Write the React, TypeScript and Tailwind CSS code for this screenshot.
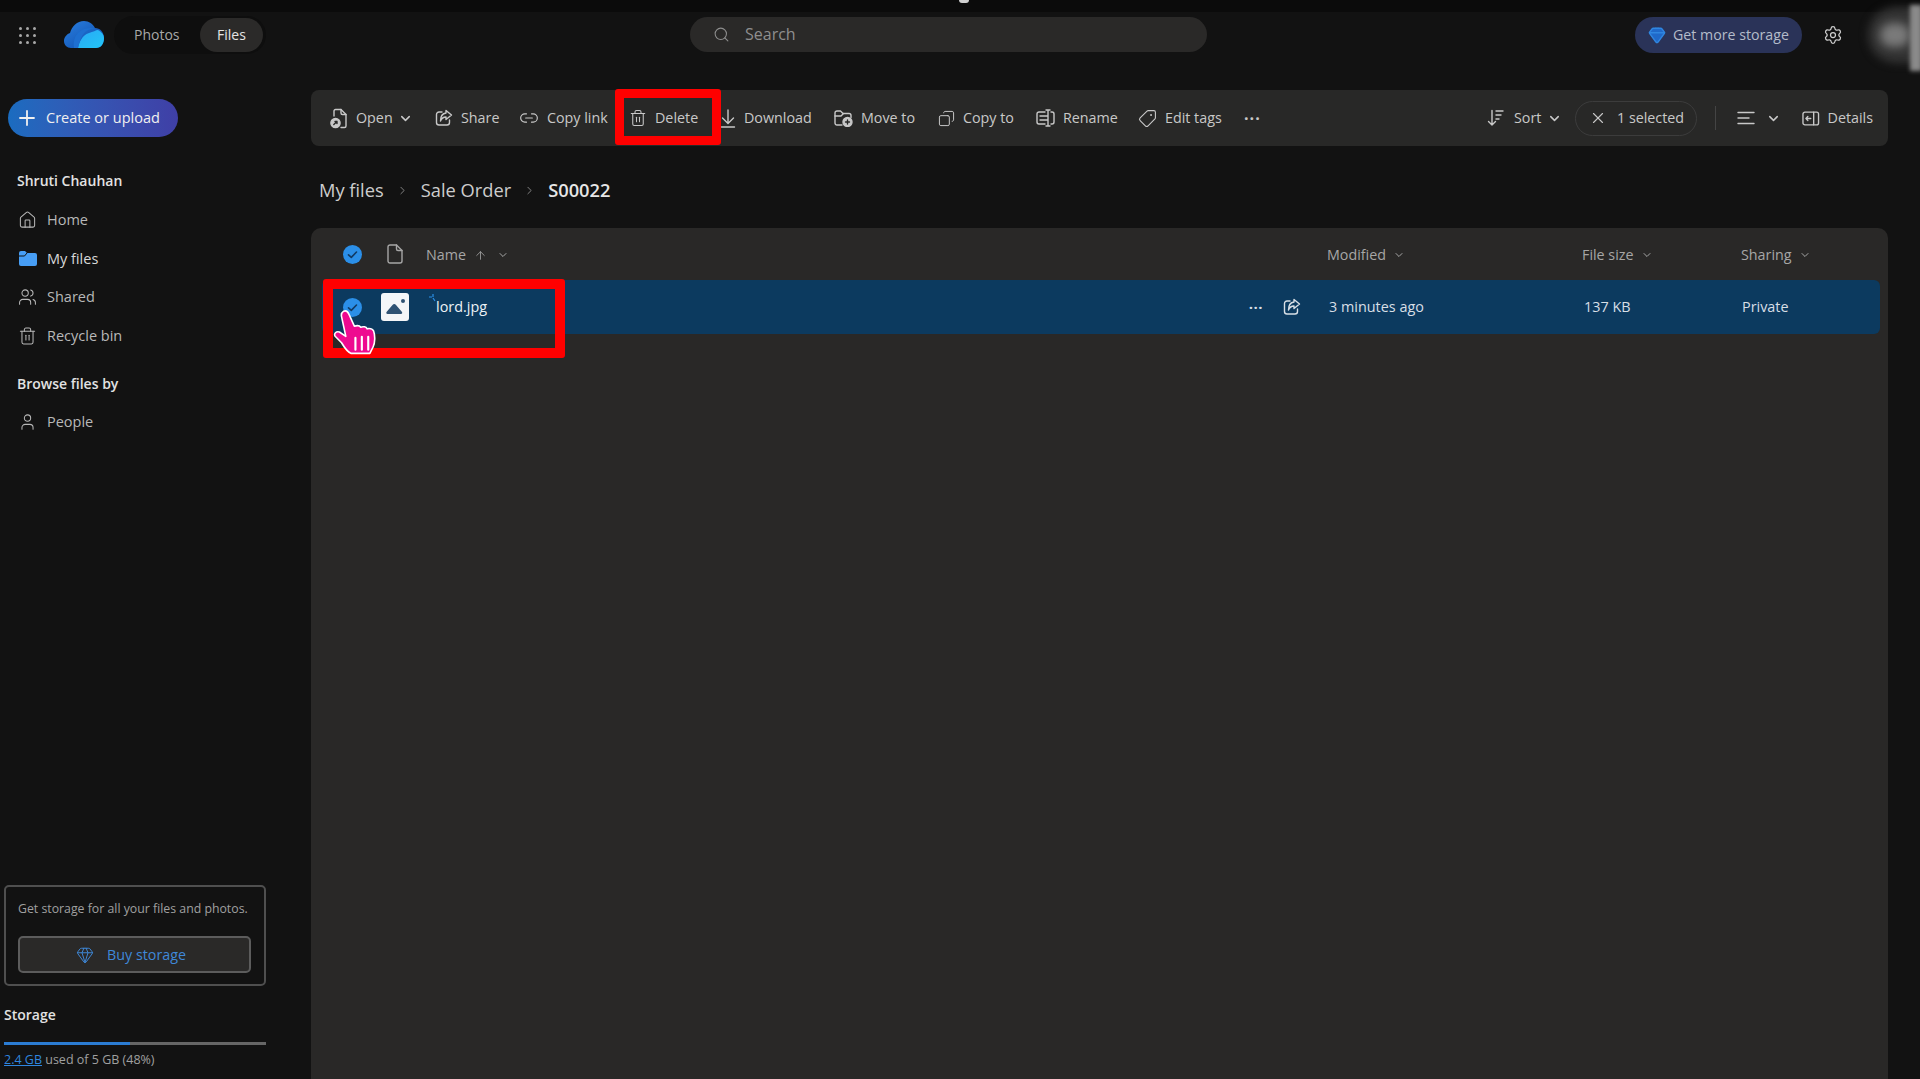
import { ArrowUp, ChevronDown, ChevronRight, Copy, Gem, House, Link2, Search, Settings, Tag, Trash2, User, Users, X } from 'lucide-react'
import type { ReactNode } from 'react'

function Cloud() {
  return (
    <svg width="40" height="28" viewBox="0 0 40 28">
      <defs>
        <linearGradient id="cloudA" x1="0" y1="0" x2="1" y2="1">
          <stop offset="0" stopColor="#2a7fe0" />
          <stop offset="1" stopColor="#0c4aa8" />
        </linearGradient>
        <linearGradient id="cloudB" x1="0" y1="0" x2="1" y2="1">
          <stop offset="0" stopColor="#2aa8f5" />
          <stop offset="1" stopColor="#22c6f7" />
        </linearGradient>
      </defs>
      <path d="M7 27C3 27 0 24 0 20c0-4 3-7 6-8C8 5 13 0 20 0c5 0 9 3 11 7 5 0 9 4 9 10 0 6-3 10-8 10Z" fill="url(#cloudA)" />
      <path d="M14 27c1-5 4-13 11-15 4-1 7-3 9-3 4 2 6 5 6 8 0 6-3 10-8 10Z" fill="url(#cloudB)" />
      <path d="M10 27c-1-8 1-15 10-19 3-1 7-1 11-1-6 1-10 3-13 8-2 4-3 8-4 12Z" fill="#1e6fd0" />
    </svg>
  )
}

function Grip() {
  return (
    <div className="grid w-[17px] grid-cols-3 gap-[4px]">
      {Array.from({ length: 9 }, (_, i) => (
        <span key={i} className="h-[3px] w-[3px] rounded-full bg-[#a8a8a8]" />
      ))}
    </div>
  )
}

const stroke = { fill: 'none', stroke: 'currentColor', strokeWidth: 1.4, strokeLinecap: 'round', strokeLinejoin: 'round' } as const

function FileOpenIcon() {
  return (
    <svg width="18" height="21" viewBox="0 0 18 21" {...stroke}>
      <path d="M4 8V3a1.5 1.5 0 0 1 1.5-1.5H11L16 6.5V18a1.5 1.5 0 0 1-1.5 1.5H11" />
      <path d="M11 1.5V5a1.5 1.5 0 0 0 1.5 1.5H16" />
      <circle cx="5.5" cy="15" r="4.6" fill="currentColor" />
      <path d="M3.8 16.5 7 13.5M5 13.5h2v2" stroke="#282827" />
    </svg>
  )
}

function ShareIcon() {
  return (
    <svg width="18" height="18" viewBox="0 0 18 18" {...stroke}>
      <path d="M7 3H4a2.5 2.5 0 0 0-2.5 2.5v8A2.5 2.5 0 0 0 4 16h8a2.5 2.5 0 0 0 2.5-2.5V11" />
      <path d="M11 1.5 16.5 6 11 10.5V8C8 8 6.5 9.5 5.5 12c0-4.5 2-7.5 5.5-8Z" />
    </svg>
  )
}

function DownloadIcon() {
  return (
    <svg width="16" height="19" viewBox="0 0 16 19" {...stroke}>
      <path d="M8 1v13M2.5 9 8 14.5 13.5 9M1.5 18h13" />
    </svg>
  )
}

function MoveIcon() {
  return (
    <svg width="19" height="17" viewBox="0 0 19 17" {...stroke}>
      <path d="M8 15H3a2 2 0 0 1-2-2V3a2 2 0 0 1 2-2h3.500l2.500 2.500h6a2 2 0 0 1 2 2v2" />
      <path d="M1 6h6l2.500-2.500" />
      <circle cx="13.500" cy="12" r="4.500" fill="currentColor" />
      <path d="M13.500 10v4M11.500 12h4" stroke="#282827" />
    </svg>
  )
}

function RenameIcon() {
  return (
    <svg width="19" height="18" viewBox="0 0 19 18" {...stroke}>
      <path d="M9 3H3a2 2 0 0 0-2 2v8a2 2 0 0 0 2 2h6M15 3h1a2 2 0 0 1 2 2v8a2 2 0 0 1-2 2h-1" />
      <path d="M12 1v16M10 1h4M10 17h4M4 7h8M4 11h8" />
    </svg>
  )
}

function SortIcon() {
  return (
    <svg width="17" height="18" viewBox="0 0 17 18" {...stroke}>
      <path d="M5 1.500v14.500M1.500 12.500 5 16l3.500-3.500M9 2h7M9 6h5M9 10h3" />
    </svg>
  )
}

function LinesIcon() {
  return (
    <svg width="18" height="14" viewBox="0 0 18 14" {...stroke}>
      <path d="M1 1.500h16M1 7h11M1 12.500h16" />
    </svg>
  )
}

function DetailsIcon() {
  return (
    <svg width="18" height="15" viewBox="0 0 18 15" {...stroke}>
      <rect x="1" y="1" width="16" height="13" rx="2" />
      <path d="M12 1v13M9 7.500H4M6 5.500l-2 2 2 2" />
    </svg>
  )
}

function FileIcon() {
  return (
    <svg width="16" height="20" viewBox="0 0 16 20" {...stroke}>
      <path d="M3 1h6.500L15 6.500V17a2 2 0 0 1-2 2H3a2 2 0 0 1-2-2V3a2 2 0 0 1 2-2Z" />
      <path d="M9.500 1v4a1.500 1.500 0 0 0 1.500 1.500h4" />
    </svg>
  )
}

function CheckDot() {
  return (
    <svg width="19" height="19" viewBox="0 0 19 19">
      <circle cx="9.500" cy="9.500" r="9.500" fill="#2b8fe8" />
      <path d="M5.500 9.800 8.300 12.400 13.500 7" fill="none" stroke="#123a63" strokeWidth="1.600" strokeLinecap="round" strokeLinejoin="round" />
    </svg>
  )
}

function ImageThumb() {
  return (
    <svg width="28" height="28" viewBox="0 0 28 28">
      <rect width="28" height="28" rx="3" fill="#f4f6f8" />
      <path d="M6.500 21c-1 0-1.500-1-1-2l6-7c1-1.200 2.500-1.200 3.500 0l6 7c.5 1 0 2-1 2Z" fill="#2f5273" />
      <circle cx="22" cy="8" r="2" fill="#2f5273" />
    </svg>
  )
}

function Folder() {
  return (
    <svg width="18" height="15" viewBox="0 0 18 15">
      <path d="M2 0h4l2 2h8a2 2 0 0 1 2 2v9a2 2 0 0 1-2 2H2a2 2 0 0 1-2-2V2a2 2 0 0 1 2-2Z" fill="#479ef5" />
      <path d="M0 5h5.500L8 2" fill="none" stroke="#121212" strokeWidth="1" />
    </svg>
  )
}

function Hand() {
  return (
    <svg width="47" height="47" viewBox="0 0 44 44">
      <path
        d="M10 3c2.500-1 4 .5 5 3l5 11c3-1 5-.5 6 1 2-1 5-.5 6 1.500 2-.5 5 0 6 2 1.500 4 1.500 11-.5 15-1 2-2 4-3 6H17c-3-1-6-5-9-10l-6-6c-1.500-2.500 1-5 4-4l6 4L8 8c-.5-2 .5-4 2-5Z"
        fill="#ee0a90"
        stroke="#ffffff"
        strokeWidth="1.500"
        strokeLinejoin="round"
      />
      <path d="M21 28v11M27 27v12M33 27v12" stroke="#ffffff" strokeWidth="2" strokeLinecap="round" />
    </svg>
  )
}

function ToolItem({ icon, label, width, chevron }: { icon: ReactNode; label: string; width: string; chevron?: boolean }) {
  return (
    <div className={`flex shrink-0 items-center gap-[8px] ${width}`}>
      {icon}
      <span className="whitespace-nowrap">{label}</span>
      {chevron && <ChevronDown size={15} strokeWidth={2.4} className="-ml-[3px]" />}
    </div>
  )
}

function NavItem({ icon, label, active }: { icon: ReactNode; label: string; active?: boolean }) {
  return (
    <div className={`flex h-[38.500px] items-center gap-[10px] pl-[18px] text-[14.500px] ${active ? 'font-medium text-[#d8d8d8]' : 'text-[#b8b8b8]'}`}>
      <span className="flex w-[19px] justify-center">{icon}</span>
      {label}
    </div>
  )
}

function ColHead({ label, width }: { label: string; width: string }) {
  return (
    <div className={`flex shrink-0 items-center gap-[7px] pt-[2px] text-[14.300px] font-medium text-[#a6a6a6] ${width}`}>
      {label}
      <ChevronDown size={12} strokeWidth={2} />
    </div>
  )
}

export default function App() {
  return (
    <div className="flex h-[1079px] w-[1920px] flex-col overflow-hidden bg-[#121212] font-['Open_Sans','Noto_Sans',sans-serif] text-[#cfcfcf]">
      <div className="flex h-[12px] shrink-0 justify-center bg-[#0b0b0b]">
        <span className="ml-[8px] h-[3px] w-[10px] rounded-b-full bg-[#d0d0d0]" />
      </div>

      <header className="flex h-[46px] shrink-0 items-center">
        <div className="flex w-[690px] shrink-0 items-center pl-[19px]">
          <Grip />
          <div className="ml-[28px] -mt-[1px]">
            <Cloud />
          </div>
          <div className="ml-[10px] -mt-[1px] flex h-[38px] w-[152px] items-center justify-between rounded-full bg-[#0e0e0e] pl-[20px] pr-[3px] text-[14px]">
            <span className="text-[#a8a8a8]">Photos</span>
            <span className="flex h-[34px] w-[63px] items-center justify-center rounded-full bg-[#2b2a29] font-medium text-[#e4e4e4]">Files</span>
          </div>
        </div>
        <div className="-mt-[1px] flex h-[35px] w-[517px] shrink-0 items-center gap-[15px] rounded-full bg-[#2a2928] pl-[23px] text-[16px] text-[#8e8e8e]">
          <Search size={17} strokeWidth={1.500} />
          <span className="-mt-[2px]">Search</span>
        </div>
        <div className="ml-[428px] flex h-[36px] w-[167px] shrink-0 items-center gap-[7px] rounded-full bg-[#2a3358] pl-[13px] text-[14.200px] text-[#b4bcca]">
          <Gem size={18} className="fill-[#2069c9] text-[#2f86e0]" />
          Get more storage
        </div>
        <Settings size={20} strokeWidth={1.500} className="ml-[21px] shrink-0 text-[#d0d0d0]" />
        <div className="relative ml-[25px] h-[56px] w-[54px] shrink-0 overflow-visible">
          <div className="absolute inset-0 rounded-l-full bg-[#333333] blur-[4px]" />
          <div className="absolute left-[12px] top-[16px] h-[24px] w-[30px] rounded-full bg-[#7a7a7a] blur-[5px]" />
          <div className="absolute right-0 top-[-2px] h-[66px] w-[12px] bg-[#8a8a8a] blur-[2px]" />
        </div>
      </header>

      <div className="flex min-h-0 flex-1">
        <aside className="flex w-[311px] shrink-0 flex-col pb-[9px]">
          <div className="ml-[8px] mt-[41px] flex h-[38px] w-[170px] items-center gap-[11px] rounded-full bg-gradient-to-r from-[#1a6cc0] to-[#3f3fa6] pl-[11px] text-[14.500px] font-medium text-[#f0f0f0]">
            <svg width="16" height="16" viewBox="0 0 16 16" fill="none" stroke="currentColor" strokeWidth="1.800" strokeLinecap="round">
              <path d="M8 1v14M1 8h14" />
            </svg>
            Create or upload
          </div>
          <div className="mt-[33px] pl-[17px] text-[14px] font-semibold text-[#e2e2e2]">Shruti Chauhan</div>
          <div className="mt-[10px]">
            <NavItem icon={<House size={20} strokeWidth={1.300} />} label="Home" />
            <NavItem icon={<Folder />} label="My files" active />
            <NavItem icon={<Users size={20} strokeWidth={1.300} />} label="Shared" />
            <NavItem icon={<Trash2 size={20} strokeWidth={1.300} />} label="Recycle bin" />
          </div>
          <div className="mt-[18px] pl-[17px] text-[14px] font-semibold text-[#e2e2e2]">Browse files by</div>
          <div className="mt-[9px]">
            <NavItem icon={<User size={20} strokeWidth={1.300} />} label="People" />
          </div>

          <div className="ml-[4px] mt-auto w-[262px] rounded-[5px] border-2 border-[#4f4f4f] px-[12px] pb-[11px] pt-[13px]">
            <div className="whitespace-nowrap text-[12.300px] text-[#a0a0a0]">Get storage for all your files and photos.</div>
            <div className="mt-[18px] flex h-[37px] w-[233px] items-center justify-center gap-[13px] rounded-[5px] border-2 border-[#5c5c5c] bg-[#2a2928] pr-[7px] text-[14.300px] font-medium text-[#3f88d8]">
              <Gem size={18} strokeWidth={1.300} />
              Buy storage
            </div>
          </div>
          <div className="ml-[4px] mt-[18px] text-[14px] font-semibold text-[#e2e2e2]">Storage</div>
          <div className="ml-[4px] mt-[17px] h-[3px] w-[262px] bg-[#666666]">
            <div className="h-full w-[126px] bg-[#2b7cd3]" />
          </div>
          <div className="ml-[4px] mt-[6px] text-[12.500px] text-[#a0a0a0]">
            <span className="text-[#2f86df] underline">2.4 GB</span> used of 5 GB (48%)
          </div>
        </aside>

        <main className="flex w-[1577px] shrink-0 flex-col pt-[32px]">
          <div className="flex h-[56px] shrink-0 items-center rounded-[8px] bg-[#282827] pl-[19px] pr-[15px] text-[14.300px] text-[#c8c8c8]">
            <ToolItem icon={<FileOpenIcon />} label="Open" width="w-[105px]" chevron />
            <ToolItem icon={<ShareIcon />} label="Share" width="w-[84px]" />
            <ToolItem icon={<Link2 size={20} strokeWidth={1.400} />} label="Copy link" width="w-[110px]" />
            <ToolItem icon={<Trash2 size={18} strokeWidth={1.400} />} label="Delete" width="w-[91px]" />
            <ToolItem icon={<DownloadIcon />} label="Download" width="w-[114px]" />
            <ToolItem icon={<MoveIcon />} label="Move to" width="w-[104px]" />
            <ToolItem icon={<Copy size={17} strokeWidth={1.400} className="-scale-x-100" />} label="Copy to" width="w-[98px]" />
            <ToolItem icon={<RenameIcon />} label="Rename" width="w-[102px]" />
            <ToolItem icon={<Tag size={19} strokeWidth={1.400} className="-scale-x-100" />} label="Edit tags" width="w-[107px]" />
            <span className="-ml-[1px] shrink-0 text-[16px] font-bold leading-none tracking-[1px]">···</span>
            <div className="ml-auto flex items-center">
              <div className="flex w-[88px] shrink-0 items-center gap-[10px]">
                <SortIcon />
                <span>Sort</span>
                <ChevronDown size={15} strokeWidth={2.400} className="-ml-[4px]" />
              </div>
              <div className="flex h-[35px] w-[122px] items-center gap-[10px] rounded-full border border-[#3c3c3c] pl-[13px]">
                <X size={18} strokeWidth={1.500} />
                1 selected
              </div>
              <span className="ml-[18px] h-[24px] w-px bg-[#444444]" />
              <div className="ml-[21px] flex w-[65px] items-center gap-[11px]">
                <LinesIcon />
                <ChevronDown size={15} strokeWidth={2.400} />
              </div>
              <ToolItem icon={<DetailsIcon />} label="Details" width="w-[71px]" />
            </div>
          </div>

          <nav className="flex h-[82px] shrink-0 items-center pl-[8px] pt-[6px] text-[18.300px] text-[#cdcdcd]">
            My files
            <ChevronRight size={13} strokeWidth={1.500} className="mx-[12px] text-[#999999]" />
            Sale Order
            <ChevronRight size={13} strokeWidth={1.500} className="mx-[12px] text-[#999999]" />
            <span className="font-semibold text-[#e6e6e6]">S00022</span>
          </nav>

          <section className="relative min-h-0 flex-1 rounded-t-[10px] bg-[#292827] pl-[11px] pr-[8px]">
            <div className="flex h-[52px] items-center pl-[21px]">
              <CheckDot />
              <span className="ml-[25px] flex text-[#a6a6a6]">
                <FileIcon />
              </span>
              <div className="ml-[23px] flex flex-1 items-center pt-[2px] text-[14.300px] font-medium text-[#a6a6a6]">
                Name
                <ArrowUp size={13} strokeWidth={1.500} className="ml-[8px]" />
                <ChevronDown size={12} strokeWidth={2} className="ml-[10px]" />
              </div>
              <ColHead label="Modified" width="w-[255px]" />
              <ColHead label="File size" width="w-[159px]" />
              <ColHead label="Sharing" width="w-[139px]" />
            </div>
            <div className="flex h-[54px] items-center rounded-[6px] bg-[#0c3a5f] pl-[21px] text-[14.400px] text-[#d8dfe6]">
              <CheckDot />
              <span className="ml-[19px] flex">
                <ImageThumb />
              </span>
              <div className="relative ml-[27px] flex-1 text-[#eef2f6]">
                lord.jpg
                <svg width="8" height="9" viewBox="0 0 8 9" className="absolute left-[-7px] top-[-2px]" fill="none" stroke="#2b8fe8" strokeWidth="1.200">
                  <path d="M0 3h3M4 0v3M6 7 4 4" />
                </svg>
              </div>
              <span className="mr-[20px] text-[15px] font-bold leading-none tracking-[0.5px]">···</span>
              <span className="mr-[27px] flex">
                <ShareIcon />
              </span>
              <div className="w-[256px] shrink-0 pl-[1px]">3 minutes ago</div>
              <div className="w-[158px] shrink-0">137 KB</div>
              <div className="w-[138px] shrink-0">Private</div>
            </div>
          </section>
        </main>
      </div>

      {/* red annotation boxes and cursor sit over the page */}
      <div className="absolute left-[615px] top-[89px] h-[56px] w-[106px] rounded-[3px] border-[9px] border-[#ff0000]" />
      <div className="absolute left-[323px] top-[279px] h-[79px] w-[242px] rounded-[3px] border-[10px] border-[#ff0000]" />
      <div className="absolute left-[333px] top-[308px]">
        <Hand />
      </div>
    </div>
  )
}
